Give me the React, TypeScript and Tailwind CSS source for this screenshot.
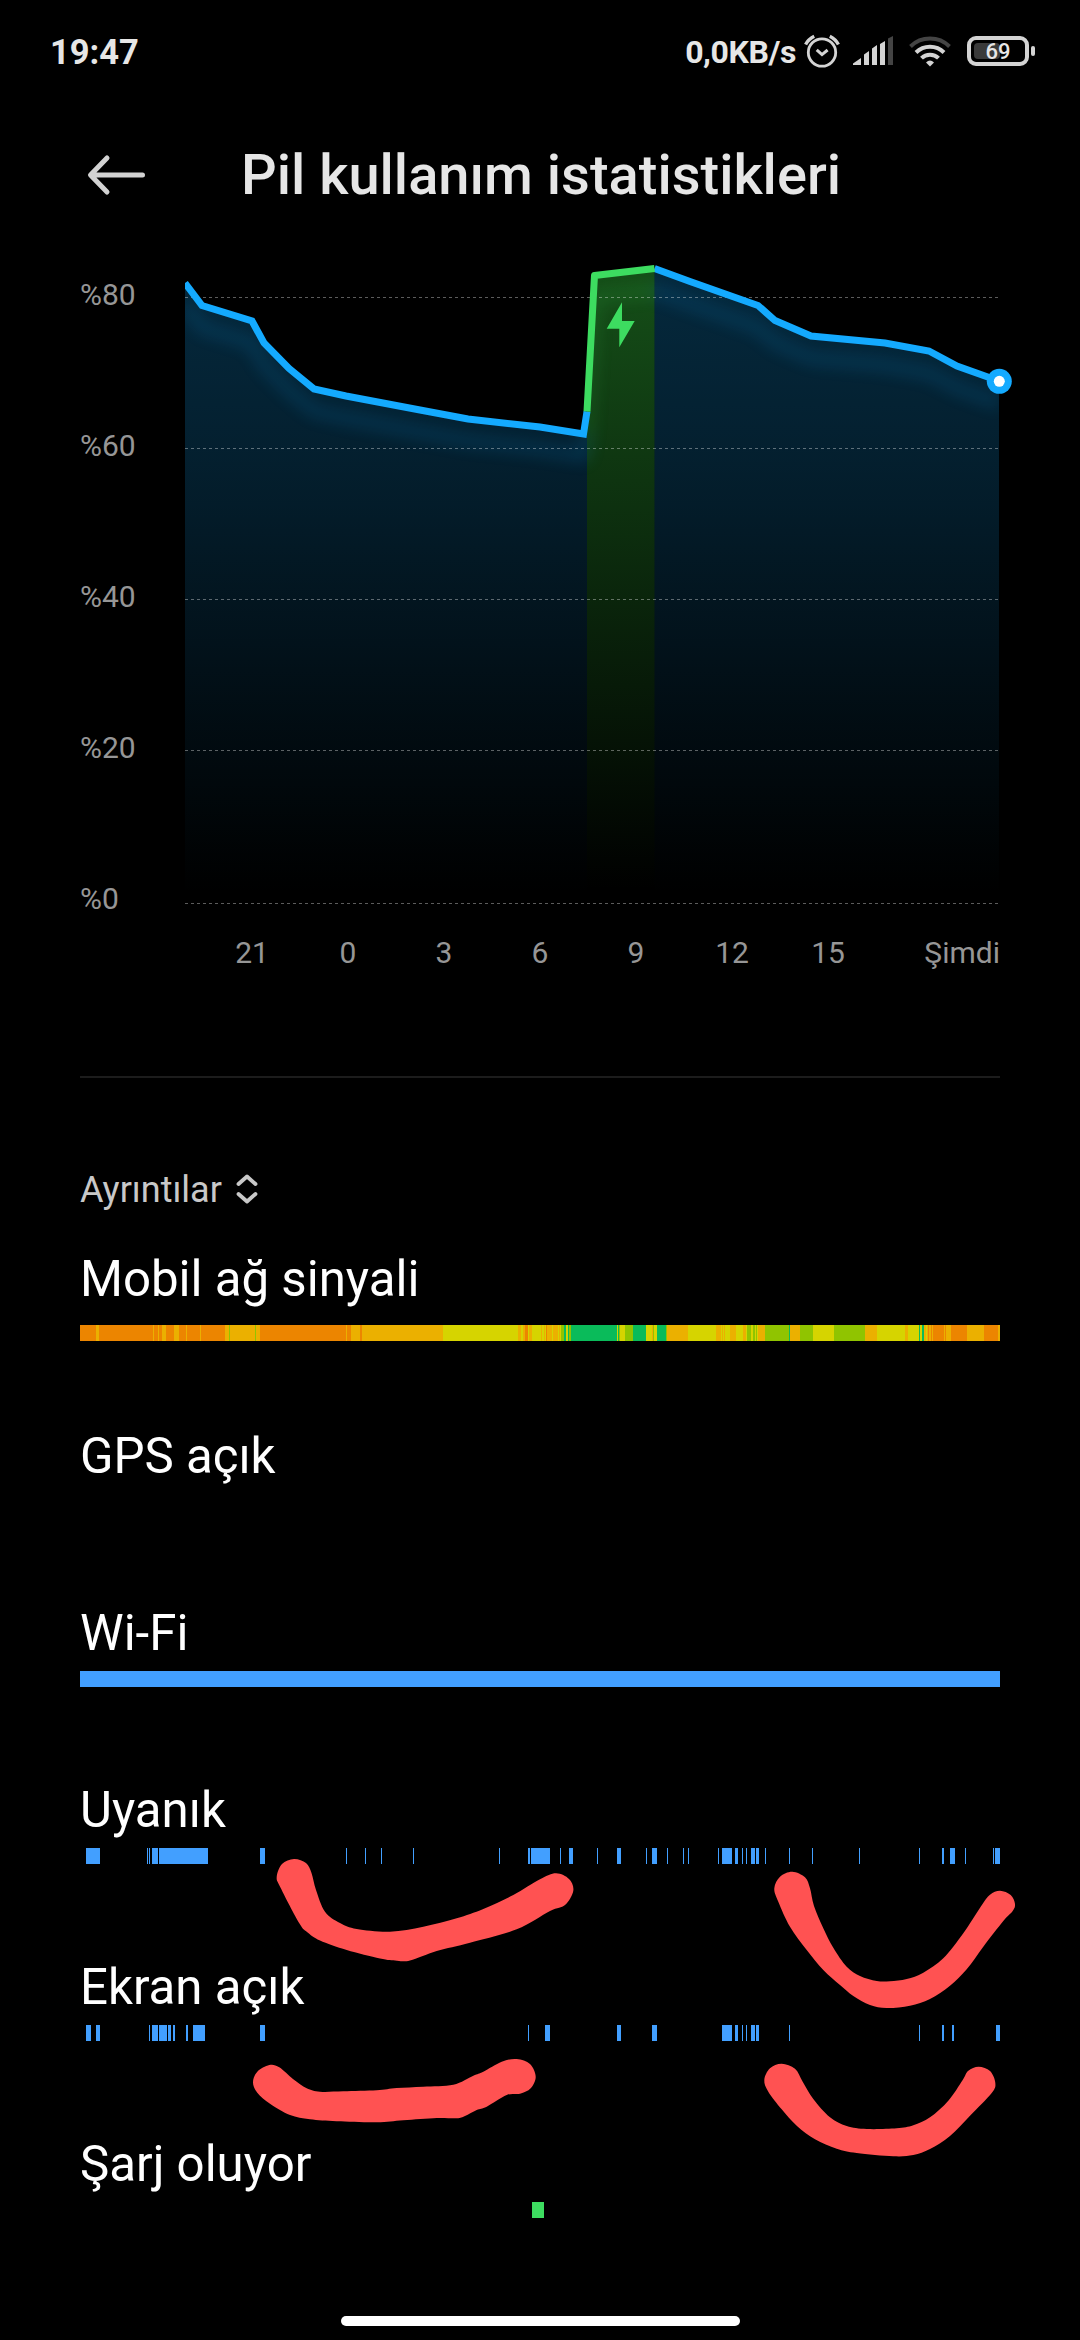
const BLUE = '#14aaff'
const GREEN = '#3ddc60'

// signal strength colors, weak to strong
const O = '#ec8500'
const A = '#ebb000'
const Y = '#d6d400'
const L = '#90c400'
const G = '#0abb5a'

type Segment = [start: number, width: number, color?: string]
type Point = [number, number]

const signal: Segment[] = [
  [0, 145, O], [16, 3, A], [73, 1, A], [78, 1, A], [82, 4, A], [94, 5, A], [106, 1, A], [120, 1, A],
  [145, 35, A], [149, 1, L], [175, 1, L],
  [180, 91, O], [266, 1, A], [271, 9, A], [280, 2, O], [282, 81, A],
  [363, 75, Y], [438, 3, A], [441, 4, Y], [443, 2, A], [445, 3, O], [448, 1, Y], [449, 3, A], [452, 12, Y], [461, 1, A],
  [464, 2, A], [466, 1, O], [467, 14, A], [463, 1, Y], [465, 1, Y], [472, 1, Y], [478, 1, Y], [480, 1, Y],
  [481, 3, L], [484, 2, G], [486, 2, Y], [488, 1, G], [489, 2, L], [491, 46, G],
  [537, 1, Y], [538, 1, G], [539, 1, L], [540, 5, Y], [545, 8, L], [553, 13, G], [566, 6, Y], [572, 1, A], [573, 1, L],
  [574, 3, Y], [577, 9, G], [586, 1, L], [587, 21, A], [608, 28, Y], [636, 5, A],
  [641, 10, Y], [642, 1, A], [644, 1, A], [650, 1, A], [651, 5, A], [656, 7, Y], [663, 3, A], [666, 1, Y],
  [667, 4, L], [671, 2, Y], [673, 2, L], [675, 3, Y], [676, 1, L], [678, 7, A], [685, 24, L], [709, 1, G],
  [710, 10, A], [720, 13, L], [733, 21, Y], [754, 31, L], [785, 12, A], [797, 28, Y], [825, 3, A],
  [828, 11, Y], [839, 1, G], [840, 2, Y], [842, 2, G], [844, 9, A], [846, 1, Y], [848, 1, O], [851, 1, O],
  [853, 13, O], [864, 1, A], [866, 5, A], [871, 16, O], [887, 17, A], [904, 14, O], [918, 2, A],
]

const awake: Segment[] = [
  [6, 14], [67, 1], [69, 1], [72, 6], [79, 49], [180, 5], [266, 1], [285, 1], [301, 1], [333, 1], [419, 1],
  [448, 2], [451, 19], [480, 1], [489, 4], [517, 1], [537, 4], [566, 1], [572, 5], [587, 1], [603, 1], [608, 1],
  [638, 1], [642, 10], [655, 3], [662, 1], [666, 1], [671, 4], [676, 3], [685, 1], [709, 1], [732, 1], [779, 1],
  [839, 1], [862, 2], [870, 5], [885, 1], [913, 1], [915, 5],
]

const screenOn: Segment[] = [
  [6, 5], [16, 4], [69, 1], [72, 6], [79, 8], [88, 3], [93, 2], [106, 2], [113, 12], [180, 5], [448, 1], [465, 5],
  [537, 4], [572, 5], [642, 10], [655, 3], [662, 1], [666, 1], [671, 4], [676, 3], [709, 1], [839, 1],
  [862, 2], [872, 2], [916, 4],
]

const rows: { label: string; segments: Segment[]; color: string; low?: boolean }[] = [
  { label: 'Mobil ağ sinyali', segments: signal, color: O, low: true },
  { label: 'GPS açık', segments: [], color: '#429fff' },
  { label: 'Wi-Fi', segments: [[0, 920]], color: '#429fff' },
  { label: 'Uyanık', segments: awake, color: '#429fff' },
  { label: 'Ekran açık', segments: screenOn, color: '#429fff' },
  { label: 'Şarj oluyor', segments: [[452, 12]], color: GREEN },
]

// outlines of the hand-drawn marks
const marks: Point[][] = [
  [
    [276.7, 1877], [280.7, 1888], [299.3, 1923.3], [307, 1932], [320, 1940.5], [346.7, 1950], [380, 1958.5], [397, 1960.7], [410, 1960.5],
    [436.7, 1951], [470, 1942.7], [516.7, 1929.3], [550, 1911], [565, 1905], [573.3, 1890.7], [569, 1879], [556, 1873.3],
    [540, 1879.3], [513.3, 1895], [483.3, 1909], [456.7, 1918.3], [423.3, 1926.7], [390, 1931.7], [356.7, 1929],
    [340, 1923], [325, 1911.7], [316, 1890], [311.5, 1873], [306, 1863], [294, 1859], [282, 1864],
  ],
  [
    [774.3, 1888.3], [778.3, 1901.7], [790, 1926.7], [806.7, 1950], [823.3, 1970], [840, 1985], [853.3, 1996],
    [870, 2005], [886.7, 2008], [910, 2005.7], [930, 1999], [950, 1985.7], [966.7, 1969.3], [983.3, 1946.7],
    [1003.3, 1921], [1012.7, 1911], [1015, 1904], [1010.7, 1895], [1000, 1890.7], [990, 1894.7], [980.7, 1906.7],
    [963.3, 1933.3], [943.3, 1958.3], [923.3, 1972.7], [906.7, 1979], [890, 1981.3], [876.7, 1981], [860, 1976],
    [846.7, 1966.7], [833.3, 1947.7], [823.3, 1928.3], [814, 1906], [810, 1888.3], [805, 1877.3], [792.3, 1871.7],
    [780, 1876.7],
  ],
  [
    [253, 2082.3], [257.3, 2092.7], [270, 2103.7], [290, 2115], [310, 2119.3], [336.7, 2121.3], [376.7, 2122.3],
    [403.3, 2120.3], [436.7, 2118], [456.7, 2118.3], [465, 2116], [476.7, 2110], [486.7, 2106.7], [506.7, 2095],
    [520, 2093.7], [530.7, 2088.3], [535.7, 2076.7], [530, 2064], [516.7, 2059], [501.7, 2061.7], [483.3, 2071.7],
    [473.3, 2075.7], [453.3, 2084.7], [423.3, 2086.7], [396.7, 2088], [376.7, 2090.3], [343.3, 2091.3],
    [320, 2091.7], [306.7, 2088.3], [293.3, 2079.3], [279.3, 2067.3], [269.3, 2065], [257.3, 2071.7],
  ],
  [
    [764.3, 2080], [768.3, 2091.7], [781.7, 2109.3], [796.7, 2125.7], [815, 2139.3], [836.7, 2148.7], [856.7, 2153],
    [893.3, 2156.3], [913.3, 2155], [930, 2149], [950, 2136], [970, 2115.7], [991.7, 2093], [995.3, 2082.7],
    [990, 2071], [978.7, 2066.7], [968.3, 2070.7], [962.7, 2080], [948.3, 2100.7], [930, 2117.3], [913.3, 2125.3],
    [896.7, 2128.3], [866.7, 2129], [846.7, 2126], [830, 2117.3], [813.3, 2099], [802.7, 2081.7], [795, 2068.7],
    [781.7, 2063.7], [770, 2068.3],
  ],
]

// closed Catmull-Rom curve through the points
function smooth(pts: Point[]) {
  const n = pts.length
  let d = `M${pts[0][0]} ${pts[0][1]}`
  for (let i = 0; i < n; i++) {
    const p0 = pts[(i + n - 1) % n]
    const p1 = pts[i]
    const p2 = pts[(i + 1) % n]
    const p3 = pts[(i + 2) % n]
    d += `C${p1[0] + (p2[0] - p0[0]) / 6} ${p1[1] + (p2[1] - p0[1]) / 6} ${p2[0] - (p3[0] - p1[0]) / 6} ${p2[1] - (p3[1] - p1[1]) / 6} ${p2[0]} ${p2[1]}`
  }
  return d + 'Z'
}

const lineBefore = '185,283 202,305.5 252,321 264,343 289,368.5 314,389 346,396 420,410 468,419 540,427 583.5,434 587,411.5'
const lineCharge = '587,411.5 594.5,275.5 654.5,268.5'
const lineAfter = '654.5,268.5 690,281.5 758,305.5 775,320.5 811,336 885,343 929,351 957,366 999,381'

function StatusBar() {
  return (
    <div className="flex h-[104px] items-center pl-[50px] pr-[45px] text-[#e6e6e6]">
      <span className="text-[34.5px] font-bold leading-none">19:47</span>
      <span className="ml-auto text-[32px] font-bold leading-none tracking-[-0.4px]">0,0KB/s</span>
      {/* Alarm */}
      <svg width="36" height="36" viewBox="0 0 36 36" fill="none" stroke="#d4d4d4" className="ml-2">
        <circle cx="18" cy="18.5" r="13.7" strokeWidth="2.8" />
        <path d="M12.7 15.8 18 20.6l5.6-4.6" strokeWidth="3" />
        <path d="M1.6 10.5Q4.5 5 10.2 2.2M25.8 2.2Q31.5 5 34.4 10.5" strokeWidth="3.4" />
      </svg>
      {/* Signal */}
      <svg width="42" height="36" viewBox="0 0 42 36" fill="#d4d4d4" className="ml-[13px]">
        <path d="M0 31V29.5L8 24V31ZM11 31V20.5L16 17V31ZM19 31V14.5L24 11V31ZM27 31V10L32 7V31Z" />
        <path d="M35 31V4.500L40 2V31Z" fill="#444" />
      </svg>
      {/* Wi-Fi */}
      <svg width="42" height="36" viewBox="0 0 42 36" fill="none" stroke="#d4d4d4" strokeWidth="4" className="ml-[14px]">
        <path d="M1.500 12.500A28 28 0 0 1 40.500 12.500" stroke="#444" />
        <path d="M7 18.500A20 20 0 0 1 35 18.500" />
        <path d="M12.500 24.200A12 12 0 0 1 29.500 24.200" />
        <path d="M17 28.500Q21 24.500 25 28.500L21 32.500Z" fill="#d4d4d4" stroke="none" />
      </svg>
      {/* Battery */}
      <div className="relative ml-4 mt-[-2px] flex h-[30px] w-[62px] items-center justify-center rounded-[9px] border-4 border-[#d4d4d4]">
        <div className="absolute left-[3px] top-[3px] h-4 w-[26px] rounded-sm bg-[#3a3a3a]" />
        <span className="relative mt-0.5 text-[22px] font-medium leading-none">69</span>
      </div>
      <div className="ml-0.5 mt-[-3px] h-[10px] w-1 rounded-sm bg-[#d4d4d4]" />
    </div>
  )
}

function Chart() {
  return (
    <section>
      <div className="flex h-[674px] pl-20">
        <div className="flex w-[105px] shrink-0 flex-col gap-[115px] pt-[31px] text-[30px] leading-[36px] text-[#969696]">
          {['%80', '%60', '%40', '%20', '%0'].map((t) => (
            <span key={t}>{t}</span>
          ))}
        </div>
        <svg width="840" height="674" viewBox="185 246 840 674" fill="none" className="shrink-0">
          <defs>
            <linearGradient id="fillBlue" gradientUnits="userSpaceOnUse" x1="0" y1="268" x2="0" y2="895">
              <stop stopColor={BLUE} stopOpacity="0.24" />
              <stop offset="0.3" stopColor={BLUE} stopOpacity="0.185" />
              <stop offset="1" stopColor={BLUE} stopOpacity="0" />
            </linearGradient>
            <linearGradient id="fillGreen" gradientUnits="userSpaceOnUse" x1="0" y1="268" x2="0" y2="890">
              <stop stopColor="#38d040" stopOpacity="0.38" />
              <stop offset="1" stopColor="#38d040" stopOpacity="0" />
            </linearGradient>
            <clipPath id="under">
              <polygon points={`185,904 ${lineBefore} ${lineCharge} ${lineAfter} 999,904`} />
            </clipPath>
            <filter id="glow" x="-10%" y="-30%" width="120%" height="180%">
              <feGaussianBlur stdDeviation="8" />
            </filter>
          </defs>

          <polygon points={`185,904 ${lineBefore} 587,904`} fill="url(#fillBlue)" />
          <polygon points={`587,904 ${lineCharge} 654.5,904`} fill="url(#fillGreen)" />
          <polygon points={`654.5,904 ${lineAfter} 999,904`} fill="url(#fillBlue)" />

          <g clipPath="url(#under)">
            <g filter="url(#glow)" transform="translate(0 22)" strokeWidth="12" opacity="0.14">
              <polyline points={lineBefore} stroke={BLUE} />
              <polyline points={lineCharge} stroke={GREEN} />
              <polyline points={lineAfter} stroke={BLUE} />
            </g>
          </g>

          {[297.5, 448.5, 599.5, 750.5, 903.5].map((y) => (
            <path key={y} d={`M185 ${y}H999`} stroke="#fff" strokeOpacity="0.36" strokeDasharray="3 3" />
          ))}

          <g strokeWidth="7">
            <polyline points={lineBefore} stroke={BLUE} />
            <polyline points={lineAfter} stroke={BLUE} />
            <polyline points={lineCharge} stroke={GREEN} strokeLinejoin="round" />
          </g>
          <polygon points="622,302.3 622,321 634.7,321 619.3,347.3 619.3,328.7 606.7,328.7" fill={GREEN} />
          <circle cx="999.3" cy="381.3" r="12.5" fill={BLUE} />
          <circle cx="999.3" cy="381.3" r="5.5" fill="#fff" />
        </svg>
      </div>
      <div className="flex h-[66px] items-center pl-[204px] pr-20 text-[30px] leading-none text-[#969696]">
        {['21', '0', '3', '6', '9', '12', '15'].map((t) => (
          <span key={t} className="w-24 text-center">
            {t}
          </span>
        ))}
        <span className="flex-1 text-right">Şimdi</span>
      </div>
    </section>
  )
}

export default function App() {
  return (
    <div className="relative flex h-[2340px] w-[1080px] flex-col overflow-hidden bg-black font-['Roboto',sans-serif]">
      <StatusBar />

      <header className="grid h-[142px] grid-cols-[160px_1fr_160px] items-center">
        <svg width="60" height="42" viewBox="0 0 60 42" fill="none" stroke="#d2d2d2" strokeWidth="5" strokeLinecap="round" strokeLinejoin="round" className="ml-[87px]">
          <path d="M55.500 21H4M20 4 3.500 21 20 38" />
        </svg>
        <h1 className="pl-0.5 text-center text-[56px] font-medium leading-none text-[#e6e6e6]">Pil kullanım istatistikleri</h1>
      </header>

      <Chart />

      <div className="mx-20 mt-[90px] h-0.5 bg-[#1c1c1c]" />

      <main className="px-20 pt-[82px]">
        <div className="flex h-[60px] items-center gap-[14px] text-[36px] leading-none text-[#c8c8c8]">
          <span>Ayrıntılar</span>
          <svg width="22" height="30" viewBox="0 0 22 30" fill="none" stroke="#c8c8c8" strokeWidth="3.8" strokeLinecap="round" strokeLinejoin="round" className="mb-[3px]">
            <path d="M2.500 10 11 2.500 19.500 10M2.500 20 11 27.500 19.500 20" />
          </svg>
        </div>

        <div className="pt-[27px]">
          {rows.map((row) => (
            <div key={row.label} className="h-[177px]">
              <h2 className="h-16 text-[49.2px] leading-[64px] text-white">{row.label}</h2>
              <svg width="920" height="16" shapeRendering="crispEdges" className={row.low ? 'mt-[14px]' : 'mt-1.5'}>
                {row.segments.map(([x, w, color], i) => (
                  <rect key={i} x={x} width={w} height="16" fill={color ?? row.color} />
                ))}
              </svg>
            </div>
          ))}
        </div>
      </main>

      {/* Markup drawn over the rows */}
      <svg width="1080" height="2340" fill="#ff5252" className="pointer-events-none absolute inset-0">
        {marks.map((pts, i) => (
          <path key={i} d={smooth(pts)} />
        ))}
      </svg>

      <div className="mx-auto mb-[14px] mt-auto h-[10px] w-[399px] rounded-full bg-white" />
    </div>
  )
}
